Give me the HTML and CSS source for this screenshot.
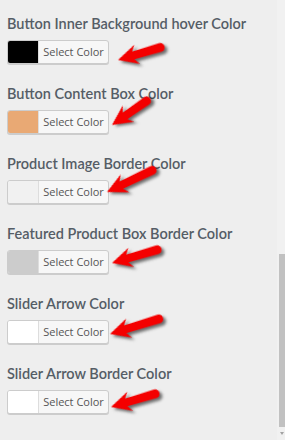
FILE: index.html
```html
<!DOCTYPE html>
<html lang="en">
<head>
<meta charset="UTF-8">
<meta name="viewport" content="width=device-width, initial-scale=1.0">
<title>Customizer Colors</title>
<link rel="stylesheet" href="styles.css">
</head>
<body>
    <div class="panel">
        <div class="controls">
            <div class="control">
                <span class="controlTitle">Button Inner Background hover Color</span>
                <button class="colorButton"><span class="swatch swatchBlack"></span><span class="buttonText">Select Color</span></button>
                <svg class="arrow arrow1" width="52" height="26" viewBox="0 -13 52 26"><path d="M0,0 L20,-10 L16,-4 L44,-4.5 A4.5,4.5 0 0 1 44,4.5 L16,4 L20,10 Z"/></svg>
            </div>
            <div class="control">
                <span class="controlTitle">Button Content Box Color</span>
                <button class="colorButton"><span class="swatch swatchOrange"></span><span class="buttonText">Select Color</span></button>
                <svg class="arrow arrow2" width="50" height="26" viewBox="0 -13 50 26"><path d="M0,0 L20,-10 L16,-4 L42,-4.5 A4.5,4.5 0 0 1 42,4.5 L16,4 L20,10 Z"/></svg>
            </div>
            <div class="control">
                <span class="controlTitle">Product Image Border Color</span>
                <button class="colorButton"><span class="swatch swatchLight"></span><span class="buttonText">Select Color</span></button>
                <svg class="arrow arrow3" width="58" height="26" viewBox="0 -13 58 26"><path d="M0,0 L20,-10 L16,-4 L50,-4.5 A4.5,4.5 0 0 1 50,4.5 L16,4 L20,10 Z"/></svg>
            </div>
            <div class="control">
                <span class="controlTitle">Featured Product Box Border Color</span>
                <button class="colorButton"><span class="swatch swatchGrey"></span><span class="buttonText">Select Color</span></button>
                <svg class="arrow arrow4" width="56" height="26" viewBox="0 -13 56 26"><path d="M0,0 L20,-10 L16,-4 L47,-4.5 A4.5,4.5 0 0 1 47,4.5 L16,4 L20,10 Z"/></svg>
            </div>
            <div class="control">
                <span class="controlTitle">Slider Arrow Color</span>
                <button class="colorButton"><span class="swatch swatchWhite"></span><span class="buttonText">Select Color</span></button>
                <svg class="arrow arrow5" width="60" height="26" viewBox="0 -13 60 26"><path d="M0,0 L20,-10 L16,-4 L51,-4.5 A4.5,4.5 0 0 1 51,4.5 L16,4 L20,10 Z"/></svg>
            </div>
            <div class="control">
                <span class="controlTitle">Slider Arrow Border Color</span>
                <button class="colorButton"><span class="swatch swatchWhite"></span><span class="buttonText">Select Color</span></button>
                <svg class="arrow arrow6" width="54" height="26" viewBox="0 -13 54 26"><path d="M0,0 L20,-10 L16,-4 L46,-4.5 A4.5,4.5 0 0 1 46,4.5 L16,4 L20,10 Z"/></svg>
            </div>
        </div>
        <div class="scrollTrack">
            <div class="scrollThumb"></div>
            <div class="scrollDown"></div>
        </div>
    </div>
</body>
</html>
```
FILE: styles.css
```css
body {
    margin: 0;
    background-color: #eeeeee;
    font-family: "Open Sans", "Noto Sans", sans-serif;
}

.panel {
    display: flex;
    height: 440px;
    overflow: hidden;
}

.controls {
    flex: 1;
    padding: 14px 0 0 7px;
    position: relative;
}

.control {
    position: relative;
    height: 70px;
}

.controlTitle {
    display: block;
    font-family: Lato, "Open Sans", sans-serif;
    font-size: 14.5px;
    font-weight: 600;
    line-height: 20px;
    color: #555d66;
    white-space: nowrap;
}

.colorButton {
    display: flex;
    align-items: stretch;
    margin-top: 6px;
    padding: 0;
    height: 24px;
    width: 102px;
    border: 1px solid #cccccc;
    border-radius: 3px;
    background-color: #f7f7f7;
    box-shadow: 0 1px 0 #cccccc;
    overflow: hidden;
    cursor: pointer;
    font-family: inherit;
}

.swatch {
    width: 30px;
    border-right: 1px solid #dddddd;
}

.swatchBlack { background-color: #000000; }
.swatchOrange { background-color: #e9a974; }
.swatchLight { background-color: #f1f1f1; }
.swatchGrey { background-color: #cccccc; }
.swatchWhite { background-color: #ffffff; }

.buttonText {
    flex: 1;
    font-size: 11px;
    line-height: 22px;
    color: #555555;
    text-align: center;
}

/* flechas vermelhas por cima */
.arrow {
    position: absolute;
    fill: #f40000;
    transform-origin: 0 50%;
    filter: drop-shadow(2px 3px 1.5px rgba(0, 0, 0, 0.55));
}

.arrow1 { left: 111px; top: 33px; transform: rotate(-16.5deg); }
.arrow2 { left: 105px; top: 28px; transform: rotate(-34.8deg); }
.arrow3 { left: 100px; top: 25px; transform: rotate(-25.6deg); }
.arrow4 { left: 105px; top: 26px; transform: rotate(-16.3deg); }
.arrow5 { left: 103px; top: 27px; transform: rotate(-17.1deg); }
.arrow6 { left: 104px; top: 30px; transform: rotate(-16.6deg); }

.scrollTrack {
    width: 8px;
    background-color: #f1f1f1;
    display: flex;
    flex-direction: column;
    align-items: flex-end;
}

.scrollThumb {
    margin-top: 254px;
    width: 6px;
    height: 173px;
    background-color: #c1c1c1;
}

.scrollDown {
    margin-top: 5px;
    margin-right: 1px;
    width: 0;
    height: 0;
    border-left: 2px solid transparent;
    border-right: 2px solid transparent;
    border-top: 3px solid #a3a3a3;
}
```
